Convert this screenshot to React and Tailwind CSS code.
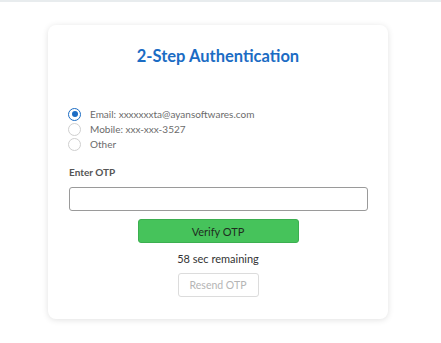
import React, { useState } from 'react';

const options = [
  { id: 'email', label: 'Email: xxxxxxxta@ayansoftwares.com' },
  { id: 'mobile', label: 'Mobile: xxx-xxx-3527' },
  { id: 'other', label: 'Other' },
];

const App = () => {
  const [method, setMethod] = useState('email');
  const [otp, setOtp] = useState('');

  return (
    <div className="w-[441px] h-[343px] bg-white border-t-2 border-[#e8ecee] font-['Lato',sans-serif] overflow-hidden">
      <div className="ml-[48px] mt-[23px] w-[340px] h-[294px] bg-white rounded-[8px] shadow-[0_1px_6px_rgba(0,0,0,0.12)] flex flex-col">
        <h1 className="mt-[19px] text-center text-[16.5px] font-bold text-[#1b6cc4] leading-[24px]">
          2-Step Authentication
        </h1>

        <div className="mt-[39px] ml-[20px] flex flex-col gap-[1px]">
          {options.map((opt) => (
            <label key={opt.id} className="flex items-center h-[14px] cursor-pointer">
              <span
                onClick={() => setMethod(opt.id)}
                className={`w-[13px] h-[13px] rounded-full border flex items-center justify-center ${
                  method === opt.id ? 'border-[#1b6cc4]' : 'border-[#cfcfcf]'
                }`}
              >
                {method === opt.id && <span className="w-[6px] h-[6px] rounded-full bg-[#1b6cc4]" />}
              </span>
              <span className="ml-[9px] text-[10px] text-[#6b6b6b] leading-[14px]">{opt.label}</span>
            </label>
          ))}
        </div>

        <div className="mt-[14px] ml-[21px] text-[10px] font-bold text-[#555] leading-[14px]">Enter OTP</div>

        <input
          value={otp}
          onChange={(e) => setOtp(e.target.value)}
          className="mt-[8px] ml-[21px] w-[299px] h-[24px] border border-[#9a9a9a] rounded-[3px] outline-none px-2 text-[11px]"
        />

        <button className="mt-[8px] mx-auto w-[161px] h-[24px] bg-[#46c35b] border border-[#3caf50] rounded-[3px] text-[11px] text-[#1f2d1f] leading-none">
          Verify OTP
        </button>

        <div className="mt-[9px] text-center text-[11px] text-[#333] leading-[14px]">58 sec remaining</div>

        <button
          disabled
          className="mt-[7px] mx-auto w-[81px] h-[24px] border border-[#dcdcdc] rounded-[3px] text-[10.5px] text-[#b5b5b5] leading-none"
        >
          Resend OTP
        </button>
      </div>
    </div>
  );
};

export default App;
